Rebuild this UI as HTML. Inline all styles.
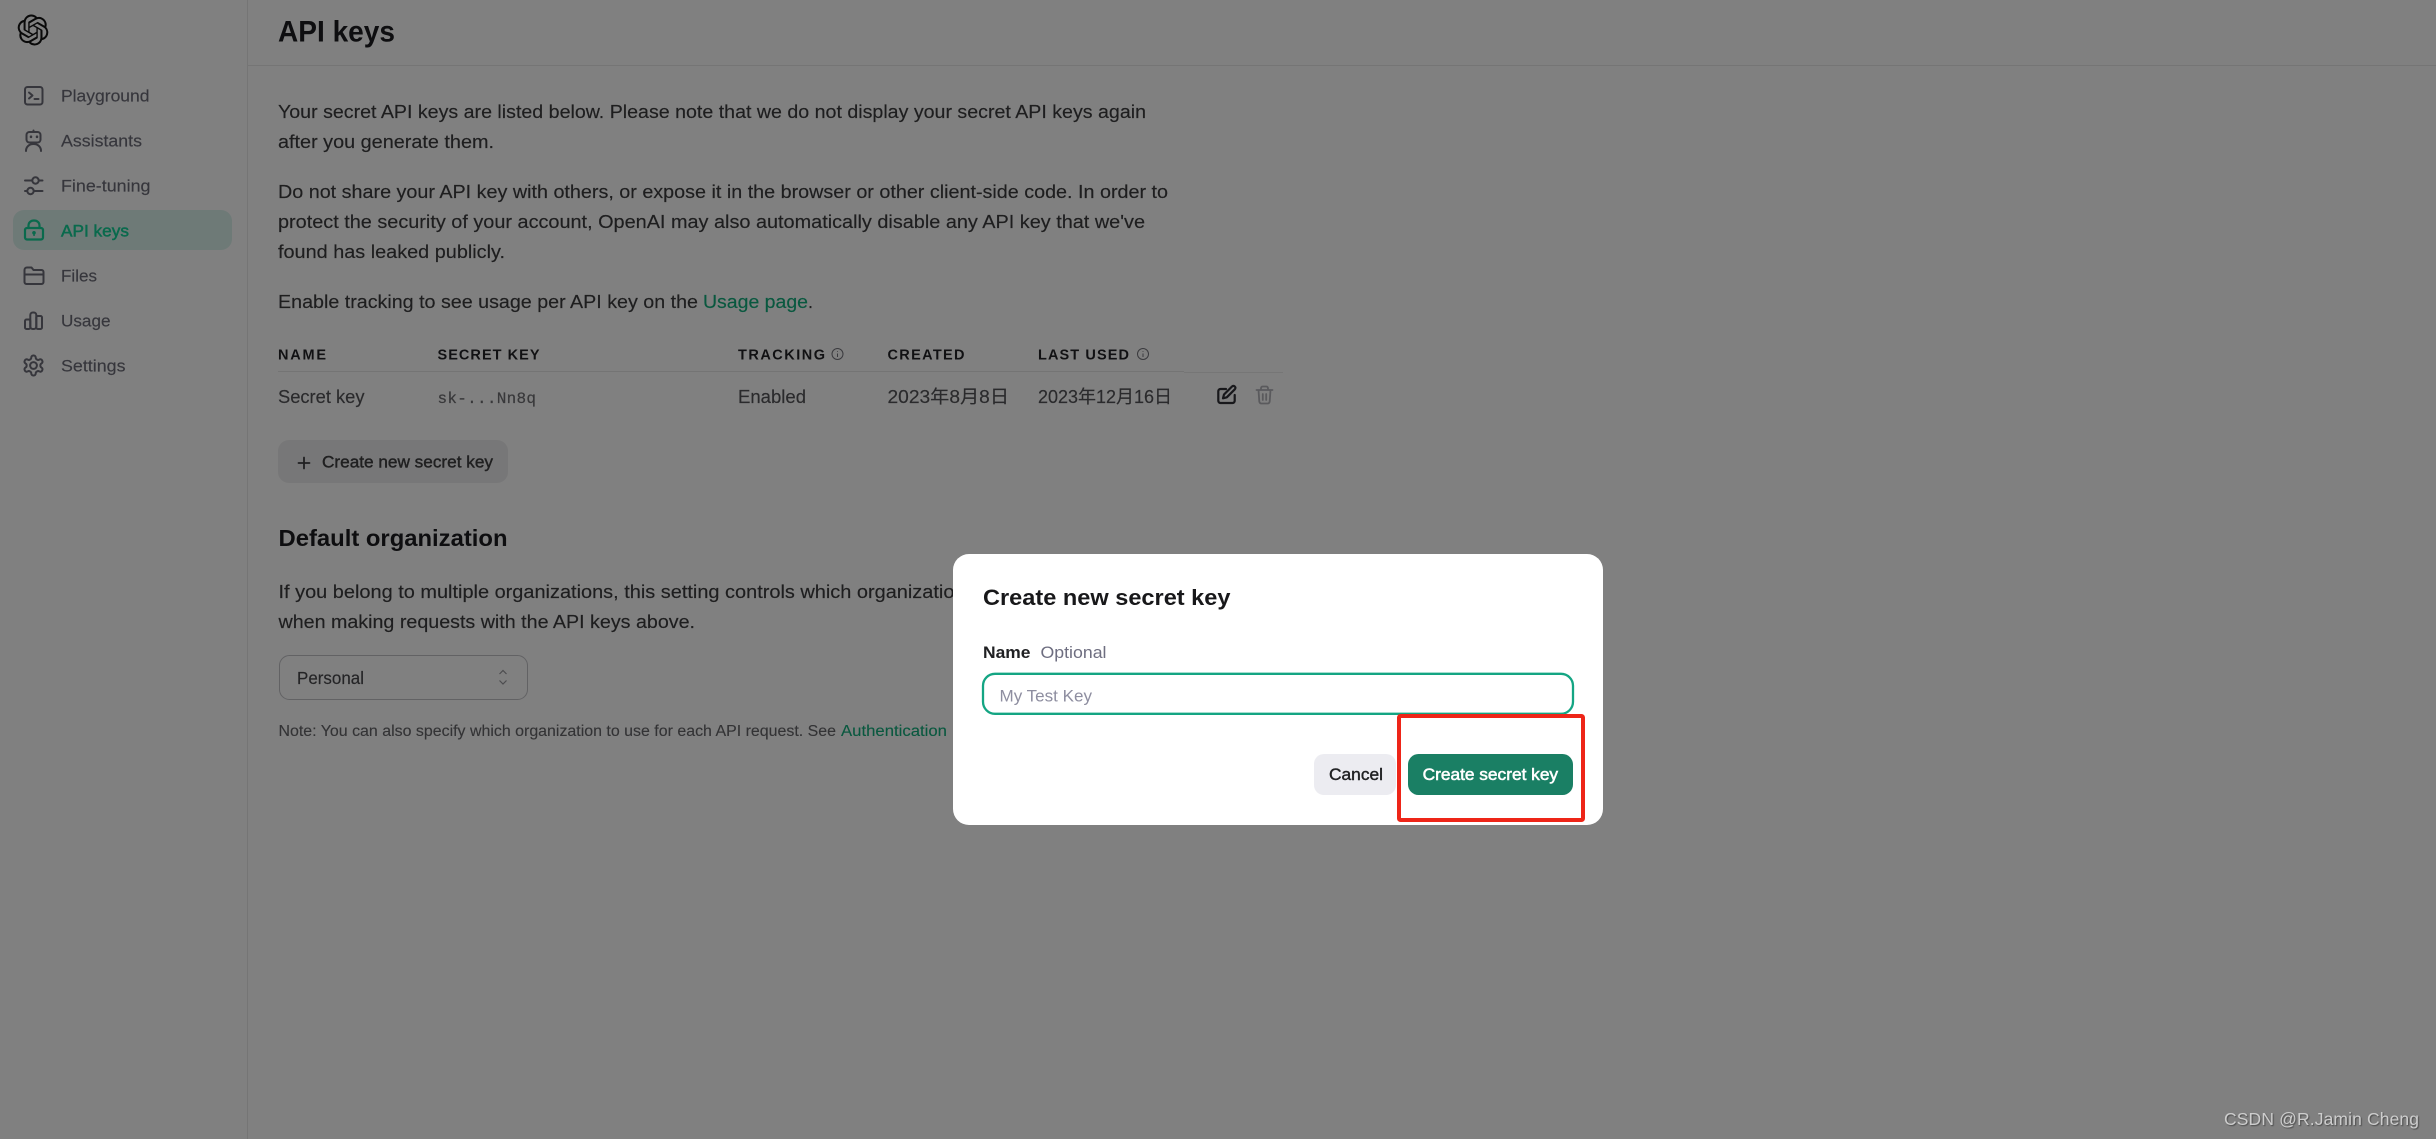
<!DOCTYPE html>
<html lang="en"><head><meta charset="utf-8"><title>API keys</title>
<style>
html,body{margin:0;padding:0;width:2436px;height:1139px;overflow:hidden;background:#808080}
svg{display:block}
text{font-family:"Liberation Sans","Noto Sans CJK SC",sans-serif;white-space:pre}
.s{font-size:17px;fill:#36363c;stroke:#36363c;stroke-width:.15px}
.b{font-size:18px;fill:#1e1e1f;stroke:#1e1e1f;stroke-width:.15px}
.r{fill:#2a2a2c;stroke:#2a2a2c}
.h{font-size:14.5px;font-weight:700;fill:#111113}
.ic{fill:none;stroke:#36363c;stroke-width:2;stroke-linecap:round;stroke-linejoin:round}
.m{stroke-width:.4px}
</style></head><body>
<svg width="2436" height="1139" viewBox="0 0 2436 1139" xmlns="http://www.w3.org/2000/svg">
<rect width="2436" height="1139" fill="#808080"/>
<rect x="247" y="0" width="1" height="1139" fill="#757575"/>
<rect x="248" y="65" width="2188" height="1" fill="#757575"/>

<!-- logo -->
<svg x="17.5" y="14.5" width="31" height="31" viewBox="0 0 24 24"><path fill="#0a0a0a" d="M22.2819 9.8211a5.9847 5.9847 0 0 0-.5157-4.9108 6.0462 6.0462 0 0 0-6.5098-2.9A6.0651 6.0651 0 0 0 4.9807 4.1818a5.9847 5.9847 0 0 0-3.9977 2.9 6.0462 6.0462 0 0 0 .7427 7.0966 5.98 5.98 0 0 0 .511 4.9107 6.051 6.051 0 0 0 6.5146 2.9001A5.9847 5.9847 0 0 0 13.2599 24a6.0557 6.0557 0 0 0 5.7718-4.2058 5.9894 5.9894 0 0 0 3.9977-2.9001 6.0557 6.0557 0 0 0-.7475-7.0729zm-9.022 12.6081a4.4755 4.4755 0 0 1-2.8764-1.0408l.1419-.0804 4.7783-2.7582a.7948.7948 0 0 0 .3927-.6813v-6.7369l2.02 1.1686a.071.071 0 0 1 .038.052v5.5826a4.504 4.504 0 0 1-4.4945 4.4944zm-9.6607-4.1254a4.4708 4.4708 0 0 1-.5346-3.0137l.142.0852 4.783 2.7582a.7712.7712 0 0 0 .7806 0l5.8428-3.3685v2.3324a.0804.0804 0 0 1-.0332.0615L9.74 19.9502a4.4992 4.4992 0 0 1-6.1408-1.6464zM2.3408 7.8956a4.485 4.485 0 0 1 2.3655-1.9728V11.6a.7664.7664 0 0 0 .3879.6765l5.8144 3.3543-2.0201 1.1685a.0757.0757 0 0 1-.071 0l-4.8303-2.7865A4.504 4.504 0 0 1 2.3408 7.872zm16.5963 3.8558L13.1038 8.364 15.1192 7.2a.0757.0757 0 0 1 .071 0l4.8303 2.7913a4.4944 4.4944 0 0 1-.6765 8.1042v-5.6772a.79.79 0 0 0-.407-.667zm2.0107-3.0231l-.142-.0852-4.7735-2.7818a.7759.7759 0 0 0-.7854 0L9.409 9.2297V6.8974a.0662.0662 0 0 1 .0284-.0615l4.8303-2.7866a4.4992 4.4992 0 0 1 6.6802 4.66zM8.3065 12.863l-2.02-1.1638a.0804.0804 0 0 1-.038-.0567V6.0742a4.4992 4.4992 0 0 1 7.3757-3.4537l-.142.0805L8.704 5.459a.7948.7948 0 0 0-.3927.6813zm1.0976-2.3654l2.602-1.4998 2.6069 1.4998v2.9994l-2.5974 1.4997-2.6067-1.4997Z"/></svg>

<!-- sidebar -->
<rect x="13" y="210" width="219" height="40" rx="11" fill="#6e7a77"/>
<g class="ic">
<rect x="25" y="87" width="17.500" height="17.500" rx="2.500"/><path d="M29 92.500l3.500 3-3.500 3M34.500 99h4"/>
<rect x="26.500" y="132" width="14" height="10.500" rx="3"/><path d="M33.500 132v-1.500"/><path d="M26 151c0-4 3-7 7.500-7s7.500 3 7.500 7"/>
<path d="M25 180.500h7M39 180.500h3.500M25 191h2M34 191h8.500"/><circle cx="35.500" cy="180.500" r="3.200"/><circle cx="30.500" cy="191" r="3.200"/>
<path d="M24.500 270c0-1.500 1-2.500 2.500-2.500h4.500l2 2.500h8c1.200 0 2 .8 2 2v10c0 1.200-.8 2-2 2H26.500c-1.200 0-2-.8-2-2zM24.500 274.500h19"/>
<rect x="25" y="319.500" width="5.300" height="9.500" rx="1.500"/><rect x="30.300" y="312.500" width="6" height="16.500" rx="2.500"/><rect x="36.300" y="316" width="5.700" height="13" rx="1.500"/>
<svg x="21.500" y="353.500" width="24" height="24" viewBox="0 0 24 24" overflow="visible"><path fill="none" stroke="#36363c" stroke-width="2" d="M12.220 2h-.44a2 2 0 0 0-2 2v.18a2 2 0 0 1-1 1.730l-.43.25a2 2 0 0 1-2 0l-.15-.08a2 2 0 0 0-2.730.73l-.22.38a2 2 0 0 0 .73 2.730l.15.1a2 2 0 0 1 1 1.720v.51a2 2 0 0 1-1 1.740l-.15.09a2 2 0 0 0-.73 2.730l.22.38a2 2 0 0 0 2.730.73l.15-.08a2 2 0 0 1 2 0l.43.25a2 2 0 0 1 1 1.730V20a2 2 0 0 0 2 2h.44a2 2 0 0 0 2-2v-.18a2 2 0 0 1 1-1.730l.43-.25a2 2 0 0 1 2 0l.15.08a2 2 0 0 0 2.730-.73l.22-.39a2 2 0 0 0-.73-2.730l-.15-.08a2 2 0 0 1-1-1.740v-.5a2 2 0 0 1 1-1.740l.15-.09a2 2 0 0 0 .73-2.730l-.22-.38a2 2 0 0 0-2.730-.73l-.15.08a2 2 0 0 1-2 0l-.43-.25a2 2 0 0 1-1-1.730V4a2 2 0 0 0-2-2z"/><circle cx="12" cy="12" r="3.400" fill="none" stroke="#36363c" stroke-width="2"/></svg>
</g>
<rect x="29.800" y="135.500" width="2.400" height="2.600" rx=".8" fill="#36363c"/><rect x="35.800" y="135.500" width="2.400" height="2.600" rx=".8" fill="#36363c"/>
<g fill="none" stroke="#0a6a4d" stroke-width="2.200" stroke-linecap="round" stroke-linejoin="round"><rect x="25" y="228" width="18" height="11.500" rx="2"/><path d="M28.500 228v-2.500c0-2.900 2.200-5 5.500-5s5.500 2.100 5.500 5v2.500"/></g><circle cx="34" cy="232.800" r="1.800" fill="#0a6a4d"/><rect x="33.300" y="233" width="1.500" height="3" fill="#0a6a4d"/>
<text class="s" x="61" y="101.500" textLength="88.500" lengthAdjust="spacingAndGlyphs">Playground</text>
<text class="s" x="61" y="146.500" textLength="81" lengthAdjust="spacingAndGlyphs">Assistants</text>
<text class="s" x="61" y="191.500" textLength="89.500" lengthAdjust="spacingAndGlyphs">Fine-tuning</text>
<text class="s" x="61" y="236.500" textLength="68" lengthAdjust="spacingAndGlyphs" style="fill:#0a6a4d;stroke:#0a6a4d;stroke-width:.5px">API keys</text>
<text class="s" x="61" y="281.500" textLength="36" lengthAdjust="spacingAndGlyphs">Files</text>
<text class="s" x="61" y="326.500" textLength="49.500" lengthAdjust="spacingAndGlyphs">Usage</text>
<text class="s" x="61" y="371.500" textLength="64.500" lengthAdjust="spacingAndGlyphs">Settings</text>

<!-- main -->
<text x="278" y="41.500" font-size="29.500" font-weight="700" fill="#0e0e10" textLength="117" lengthAdjust="spacingAndGlyphs">API keys</text>
<text class="b" x="278" y="118" textLength="868" lengthAdjust="spacingAndGlyphs">Your secret API keys are listed below. Please note that we do not display your secret API keys again</text>
<text class="b" x="278" y="148" textLength="216" lengthAdjust="spacingAndGlyphs">after you generate them.</text>
<text class="b" x="278" y="198" textLength="890" lengthAdjust="spacingAndGlyphs">Do not share your API key with others, or expose it in the browser or other client-side code. In order to</text>
<text class="b" x="278" y="228" textLength="867" lengthAdjust="spacingAndGlyphs">protect the security of your account, OpenAI may also automatically disable any API key that we've</text>
<text class="b" x="278" y="258" textLength="227" lengthAdjust="spacingAndGlyphs">found has leaked publicly.</text>
<text class="b" x="278" y="308" textLength="420" lengthAdjust="spacingAndGlyphs">Enable tracking to see usage per API key on the</text>
<text class="b" x="703" y="308" textLength="105" lengthAdjust="spacingAndGlyphs" style="fill:#09583f;stroke:#09583f">Usage page</text>
<text class="b" x="808" y="308">.</text>

<!-- table -->
<text class="h" x="278" y="359.500" textLength="48" lengthAdjust="spacing">NAME</text>
<text class="h" x="437.500" y="359.500" textLength="102" lengthAdjust="spacing">SECRET KEY</text>
<text class="h" x="738" y="359.500" textLength="87" lengthAdjust="spacing">TRACKING</text>
<text class="h" x="887.500" y="359.500" textLength="77" lengthAdjust="spacing">CREATED</text>
<text class="h" x="1038" y="359.500" textLength="91" lengthAdjust="spacing">LAST USED</text>
<g fill="none" stroke="#3a3a3e" stroke-width="1"><circle cx="837.500" cy="354" r="5.500"/><path d="M837.500 353.500v3.500M837.500 351v.8"/><circle cx="1143" cy="354" r="5.500"/><path d="M1143 353.500v3.500M1143 351v.8"/></g>
<rect x="278" y="371" width="906" height="1" fill="#747474"/><rect x="1184" y="372" width="99" height="1" fill="#767676"/>
<text class="b r" x="278" y="403" textLength="86.500" lengthAdjust="spacingAndGlyphs">Secret key</text>
<text x="437.500" y="403" font-size="16" stroke="#38383a" stroke-width=".2" textLength="98.500" lengthAdjust="spacing" style="font-family:'Liberation Mono',monospace;fill:#38383a">sk-...Nn8q</text>
<text class="b r" x="738" y="403" textLength="68" lengthAdjust="spacingAndGlyphs">Enabled</text>
<text class="b r" x="887.500" y="403" textLength="121.500" lengthAdjust="spacingAndGlyphs">2023年8月8日</text>
<text class="b r" x="1038" y="403" textLength="134" lengthAdjust="spacingAndGlyphs">2023年12月16日</text>
<g fill="none" stroke="#18181b" stroke-width="2.200" stroke-linecap="round" stroke-linejoin="round"><path d="M1226 389h-5.500c-1.300 0-2.200.9-2.200 2.200v9.600c0 1.300.9 2.200 2.200 2.200h12c1.300 0 2.200-.9 2.200-2.200V395"/><path d="M1224 394.500l8-8c.8-.8 2-.8 2.800 0s.8 2 0 2.800l-8 8-3.800 1z"/></g>
<g fill="none" stroke="#5a5a5d" stroke-width="1.800" stroke-linecap="round" stroke-linejoin="round"><path d="M1256.500 390h16M1261 390v-1.800c0-1 .7-1.700 1.700-1.700h3.600c1 0 1.700.7 1.700 1.700V390M1258.500 390l.8 11.600c.1 1.100 1 1.900 2 1.900h6.400c1 0 1.900-.8 2-1.900l.8-11.600M1262.800 394v6M1266.200 394v6"/></g>

<rect x="278" y="440" width="230" height="43" rx="11" fill="#777778"/>
<path d="M304 457.500v11M298.500 463h11" stroke="#202021" stroke-width="1.800" stroke-linecap="round"/>
<text class="m" x="322" y="467.500" font-size="16.500" fill="#202021" stroke="#202021" textLength="171" lengthAdjust="spacingAndGlyphs">Create new secret key</text>

<text x="278.500" y="546" font-size="23" font-weight="700" fill="#0e0e10" textLength="229" lengthAdjust="spacingAndGlyphs">Default organization</text>
<text class="b" x="278.500" y="598" textLength="687" lengthAdjust="spacingAndGlyphs">If you belong to multiple organizations, this setting controls which organization</text>
<text class="b" x="278.500" y="628" textLength="416.500" lengthAdjust="spacingAndGlyphs">when making requests with the API keys above.</text>
<rect x="279.500" y="655.500" width="248" height="44" rx="10" fill="none" stroke="#626264" stroke-width="1"/>
<text x="297" y="684" font-size="17.500" fill="#242426" stroke="#242426" stroke-width=".15" textLength="67" lengthAdjust="spacingAndGlyphs">Personal</text>
<path d="M499.500 674l3.500-3.500 3.500 3.500M499.500 680.500l3.500 3.500 3.500-3.500" fill="none" stroke="#4c4c4f" stroke-width="1.200"/>
<text x="278.500" y="736" font-size="15.500" fill="#333335" stroke="#333335" stroke-width=".12" textLength="557.500" lengthAdjust="spacingAndGlyphs">Note: You can also specify which organization to use for each API request. See</text>
<text x="841" y="736" font-size="15.500" fill="#09583f" stroke="#09583f" stroke-width=".12" textLength="106" lengthAdjust="spacingAndGlyphs">Authentication</text>

<!-- modal -->
<rect x="953" y="554" width="650" height="271" rx="16" fill="#fff"/>
<text x="983" y="605" font-size="22.500" font-weight="700" fill="#18181a" textLength="247.500" lengthAdjust="spacingAndGlyphs">Create new secret key</text>
<text x="983" y="658" font-size="16.500" font-weight="700" fill="#202123" textLength="47.500" lengthAdjust="spacingAndGlyphs">Name</text>
<text x="1040.500" y="658" font-size="16.500" fill="#6e6e80" textLength="66" lengthAdjust="spacingAndGlyphs">Optional</text>
<rect x="983" y="673.800" width="590" height="40" rx="12" fill="#fff" stroke="#14a583" stroke-width="2.300"/>
<text x="999.500" y="701.500" font-size="17" fill="#8e8ea0" textLength="92.500" lengthAdjust="spacingAndGlyphs">My Test Key</text>
<rect x="1314" y="754" width="82" height="41" rx="10" fill="#ececf1"/>
<text class="m" x="1329" y="780" font-size="17" fill="#202123" stroke="#202123" textLength="54" lengthAdjust="spacingAndGlyphs">Cancel</text>
<rect x="1408" y="754" width="165" height="41" rx="10.500" fill="#1a7f64"/>
<text x="1422.600" y="780" font-size="17" fill="#fff" stroke="#fff" stroke-width=".55" textLength="135.500" lengthAdjust="spacingAndGlyphs">Create secret key</text>
<rect x="1399" y="716" width="184" height="104" rx="1.500" fill="none" stroke="#ee2518" stroke-width="4"/>

<!-- watermark -->
<text x="2224" y="1125" font-size="17.500" fill="#cdcdcd" textLength="195" lengthAdjust="spacing" style="filter:drop-shadow(1px 1px .5px #4a4a4a)">CSDN @R.Jamin Cheng</text>
</svg>
</body></html>
